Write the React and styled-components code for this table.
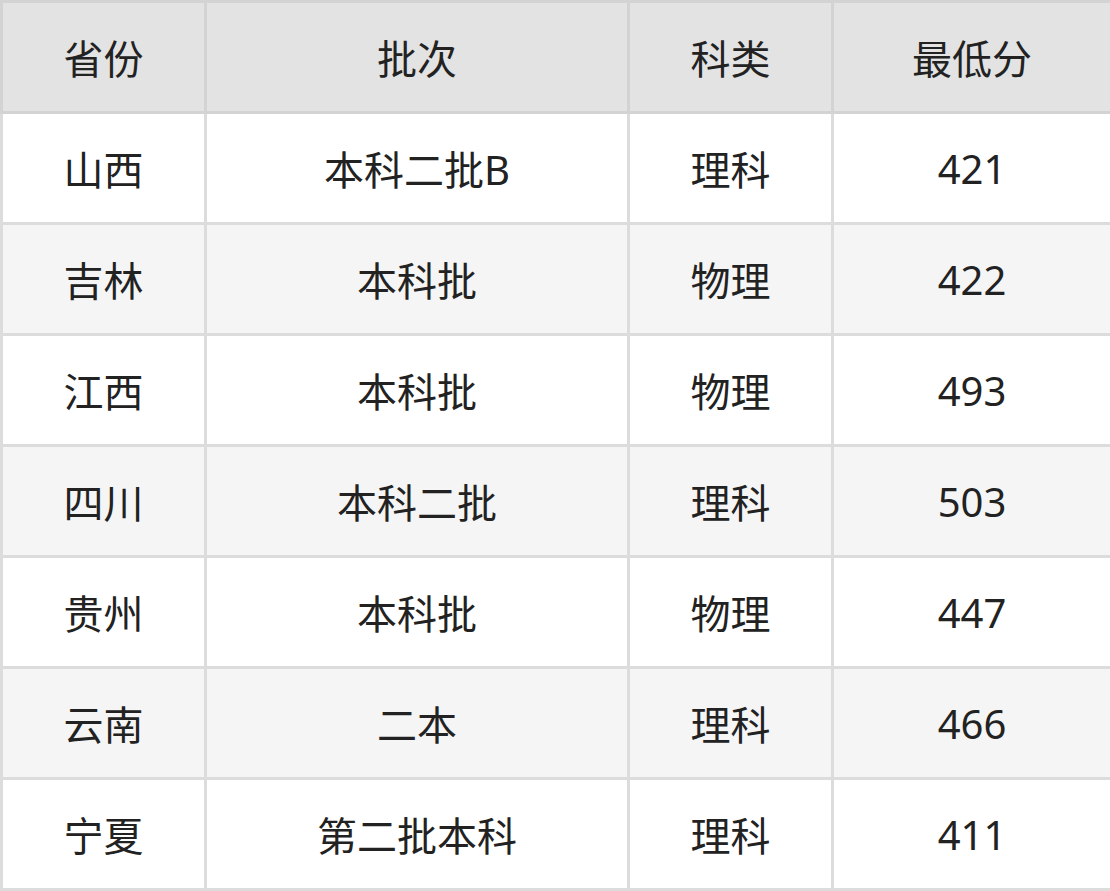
import React from 'react';
import styled, { createGlobalStyle } from 'styled-components';

const Global = createGlobalStyle`
  body { margin: 0; background: #fff; }
`;

const Table = styled.table`
  width: 1110px;
  border-collapse: collapse;
  table-layout: fixed;
  font-family: "Noto Sans", "Noto Sans CJK SC", sans-serif;
  font-size: 40px;
  color: #222;
`;

const Col = styled.col`
  width: ${p => p.$w}px;
`;

const HeadCell = styled.th`
  height: 108px;
  padding: 0;
  font-weight: 400;
  text-align: center;
  background: #e3e3e3;
  border: 3px solid #d3d3d3;
`;

const Row = styled.tr`
  background: ${p => (p.$odd ? '#f5f5f5' : '#fff')};
`;

const Cell = styled.td`
  height: 108px;
  padding: 0;
  text-align: center;
  border: 3px solid #dcdcdc;
`;

const widths = [204, 423, 204, 279];
const headers = ['省份', '批次', '科类', '最低分'];

const rows = [
  ['山西', '本科二批B', '理科', '421'],
  ['吉林', '本科批', '物理', '422'],
  ['江西', '本科批', '物理', '493'],
  ['四川', '本科二批', '理科', '503'],
  ['贵州', '本科批', '物理', '447'],
  ['云南', '二本', '理科', '466'],
  ['宁夏', '第二批本科', '理科', '411'],
];

export default function App() {
  return (
    <>
      <Global />
      <Table>
        <colgroup>
          {widths.map((w, i) => (
            <Col key={i} $w={w} />
          ))}
        </colgroup>
        <thead>
          <tr>
            {headers.map(h => (
              <HeadCell key={h}>{h}</HeadCell>
            ))}
          </tr>
        </thead>
        <tbody>
          {rows.map((r, i) => (
            <Row key={i} $odd={i % 2 === 1}>
              {r.map((c, j) => (
                <Cell key={j}>{c}</Cell>
              ))}
            </Row>
          ))}
        </tbody>
      </Table>
    </>
  );
}
